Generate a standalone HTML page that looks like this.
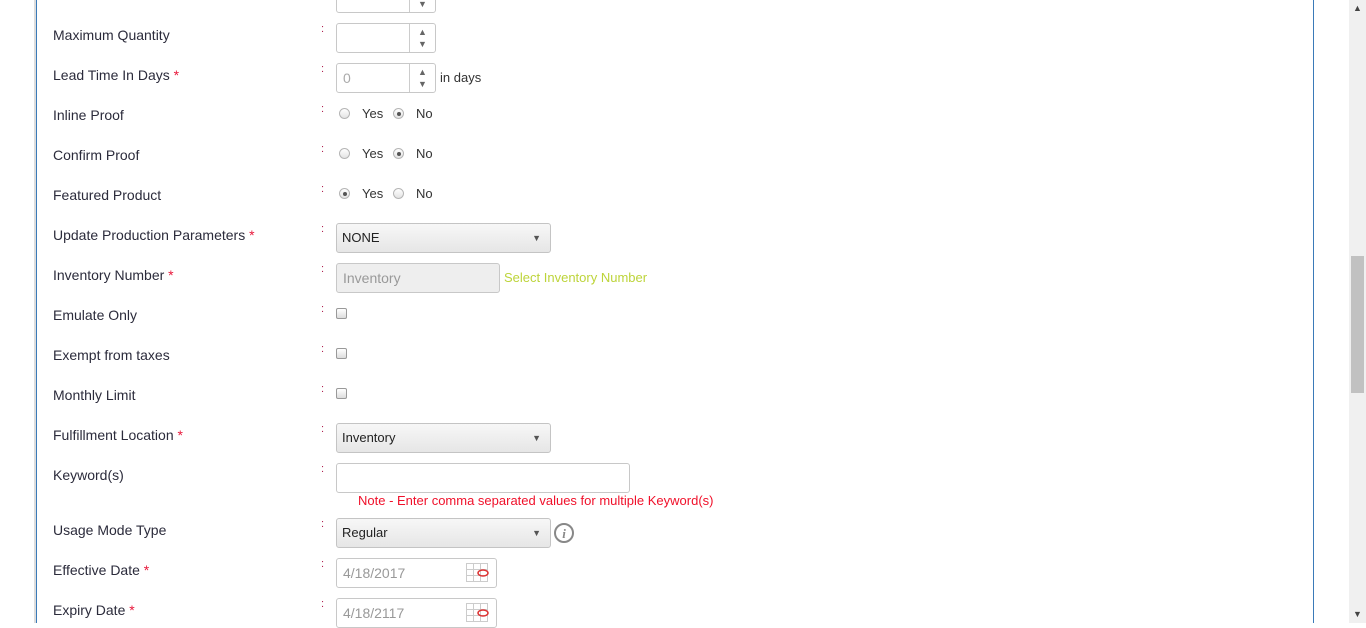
<!DOCTYPE html>
<html><head><style>
body{margin:0;width:1366px;height:623px;overflow:hidden;background:#fff;font-family:"Liberation Sans",sans-serif;font-size:14px;color:#333;position:relative}
.a{position:absolute}
.lbl{left:53px;color:#2b2b3b}
.req{color:#e8173a}
.col{left:321px;color:#b02050;font-size:11px}
.spin{left:336px;width:98px;height:28px;border:1px solid #c8c8c8;border-radius:3px;background:#fff}
.spin .b{position:absolute;left:72px;top:0;width:26px;height:28px;border-left:1px solid #ccc;font-size:9px;color:#666;text-align:center;line-height:12px;padding-top:2px;box-sizing:border-box}
.sel{left:336px;width:213px;height:28px;border:1px solid #c4c4c4;border-radius:3px;background:linear-gradient(#f7f7f7,#e6e6e6);line-height:28px;font-size:13px;color:#222}
.sel span{position:absolute;left:5px}
.sel i{position:absolute;right:9px;font-style:normal;font-size:9px;color:#555}
.rad{width:11px;height:11px;border:1px solid #b5b5b5;border-radius:50%;background:linear-gradient(#fff,#e3e3e3);box-sizing:border-box}
.rad.on::after{content:"";position:absolute;left:2.5px;top:2.5px;width:4px;height:4px;border-radius:50%;background:#555}
.chk{left:336px;width:11px;height:11px;border:1px solid #999;border-radius:2px;background:linear-gradient(#fff,#ddd);box-sizing:border-box}
.txt{left:336px;border:1px solid #c8c8c8;border-radius:3px;height:28px;line-height:28px;color:#999;padding-left:6px;box-sizing:content-box;font-size:14px}
.v{font-size:13px}
</style></head><body>
<div class="a" style="left:34px;top:0;width:2px;height:623px;background:#ddd"></div>
<div class="a" style="left:36px;top:0;width:1px;height:623px;background:#3a7ab8"></div>
<div class="a" style="left:1313px;top:0;width:1px;height:623px;background:#3a7ab8"></div>
<div class="a" style="left:1349px;top:0;width:17px;height:623px;background:#f0f0f0"></div>
<div class="a" style="left:1351px;top:256px;width:13px;height:137px;background:#c1c1c1"></div>
<div class="a" style="left:1353px;top:3px;font-size:9px;color:#444">▲</div>
<div class="a" style="left:1353px;top:609px;font-size:9px;color:#444">▼</div>

<div class="a spin" style="top:-17px"><div class="b"><br>▼</div></div>

<div class="a lbl" style="top:27px">Maximum Quantity</div>
<div class="a col" style="top:23px">:</div>
<div class="a spin" style="top:23px"><div class="b">▲<br>▼</div></div>

<div class="a lbl" style="top:67px">Lead Time In Days <span class="req">*</span></div>
<div class="a col" style="top:63px">:</div>
<div class="a spin" style="top:63px"><span style="position:absolute;left:6px;top:6px;color:#aaa">0</span><div class="b">▲<br>▼</div></div>
<div class="a v" style="left:440px;top:70px">in days</div>

<div class="a lbl" style="top:107px">Inline Proof</div>
<div class="a col" style="top:103px">:</div>
<div class="a rad" style="left:339px;top:108px"></div><div class="a v" style="left:362px;top:106px">Yes</div>
<div class="a rad on" style="left:393px;top:108px"></div><div class="a v" style="left:416px;top:106px">No</div>

<div class="a lbl" style="top:147px">Confirm Proof</div>
<div class="a col" style="top:143px">:</div>
<div class="a rad" style="left:339px;top:148px"></div><div class="a v" style="left:362px;top:146px">Yes</div>
<div class="a rad on" style="left:393px;top:148px"></div><div class="a v" style="left:416px;top:146px">No</div>

<div class="a lbl" style="top:187px">Featured Product</div>
<div class="a col" style="top:183px">:</div>
<div class="a rad on" style="left:339px;top:188px"></div><div class="a v" style="left:362px;top:186px">Yes</div>
<div class="a rad" style="left:393px;top:188px"></div><div class="a v" style="left:416px;top:186px">No</div>

<div class="a lbl" style="top:227px">Update Production Parameters <span class="req">*</span></div>
<div class="a col" style="top:223px">:</div>
<div class="a sel" style="top:223px"><span>NONE</span><i>▼</i></div>

<div class="a lbl" style="top:267px">Inventory Number <span class="req">*</span></div>
<div class="a col" style="top:263px">:</div>
<div class="a txt" style="top:263px;width:156px;background:#eee">Inventory</div>
<div class="a" style="left:504px;top:270px;color:#bdd43a;font-size:13px">Select Inventory Number</div>

<div class="a lbl" style="top:307px">Emulate Only</div>
<div class="a col" style="top:303px">:</div>
<div class="a chk" style="top:308px"></div>

<div class="a lbl" style="top:347px">Exempt from taxes</div>
<div class="a col" style="top:343px">:</div>
<div class="a chk" style="top:348px"></div>

<div class="a lbl" style="top:387px">Monthly Limit</div>
<div class="a col" style="top:383px">:</div>
<div class="a chk" style="top:388px"></div>

<div class="a lbl" style="top:427px">Fulfillment Location <span class="req">*</span></div>
<div class="a col" style="top:423px">:</div>
<div class="a sel" style="top:423px"><span>Inventory</span><i>▼</i></div>

<div class="a lbl" style="top:467px">Keyword(s)</div>
<div class="a col" style="top:463px">:</div>
<div class="a txt" style="top:463px;width:286px"></div>
<div class="a" style="left:358px;top:493px;color:#f0102a;font-size:13px">Note - Enter comma separated values for multiple Keyword(s)</div>

<div class="a lbl" style="top:522px">Usage Mode Type</div>
<div class="a col" style="top:518px">:</div>
<div class="a sel" style="top:518px"><span>Regular</span><i>▼</i></div>
<div class="a" style="left:554px;top:523px;width:16px;height:16px;border:2px solid #888;border-radius:50%;color:#888;font:bold italic 13px 'Liberation Serif',serif;text-align:center;line-height:17px">i</div>

<div class="a lbl" style="top:562px">Effective Date <span class="req">*</span></div>
<div class="a col" style="top:558px">:</div>
<div class="a txt" style="top:558px;width:153px">4/18/2017</div>
<svg class="a" style="left:466px;top:563px" width="24" height="20"><g stroke="#ccc" fill="none"><rect x="0.5" y="0.5" width="21" height="18"/><path d="M7.5 0v19M14.5 0v19M0 6.5h22M0 12.5h22"/></g><ellipse cx="17" cy="10" rx="5" ry="3" fill="none" stroke="#d33" stroke-width="1.5"/></svg>

<div class="a lbl" style="top:602px">Expiry Date <span class="req">*</span></div>
<div class="a col" style="top:598px">:</div>
<div class="a txt" style="top:598px;width:153px">4/18/2117</div>
<svg class="a" style="left:466px;top:603px" width="24" height="20"><g stroke="#ccc" fill="none"><rect x="0.5" y="0.5" width="21" height="18"/><path d="M7.5 0v19M14.5 0v19M0 6.5h22M0 12.5h22"/></g><ellipse cx="17" cy="10" rx="5" ry="3" fill="none" stroke="#d33" stroke-width="1.5"/></svg>
</body></html>
